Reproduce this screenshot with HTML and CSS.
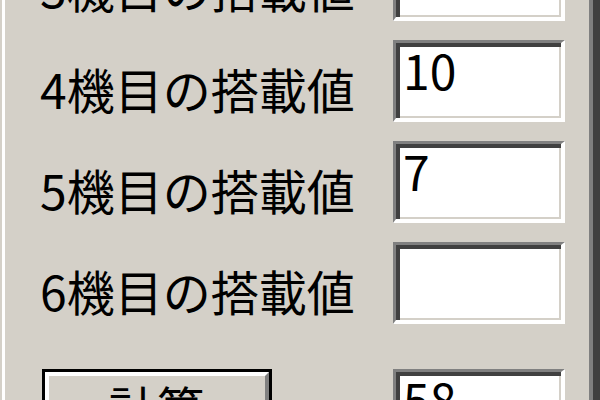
FILE: index.html
```html
<!DOCTYPE html>
<html lang="ja">
<head>
<meta charset="utf-8">
<link rel="stylesheet" href="styles.css">
</head>
<body>
<div class="window">
  <div class="frame">
    <div class="form">
      <span class="label">3機目の搭載値</span>
      <div class="field"></div>
      <span class="label">4機目の搭載値</span>
      <div class="field">10</div>
      <span class="label">5機目の搭載値</span>
      <div class="field">7</div>
      <span class="label">6機目の搭載値</span>
      <div class="field"></div>
      <button class="btn result-row" type="button"><span class="btn-inner">計算</span></button>
      <div class="field result-row">58</div>
    </div>
  </div>
</div>
</body>
</html>
```
FILE: styles.css
```css
html, body {
  margin: 0;
  padding: 0;
  background: #d4d0c8;
}
.window {
  width: 600px;
  height: 400px;
  box-sizing: border-box;
  overflow: hidden;
  border-left: 2px solid #d4d0c8;
  border-right: 7px solid #404040;
  background: #d4d0c8;
}
.frame {
  height: 100%;
  box-sizing: border-box;
  border-left: 3px solid #ffffff;
  border-right: 4px solid #808080;
  overflow: hidden;
}
.form {
  display: grid;
  grid-template-columns: 388px 172px;
  row-gap: 19px;
  margin-top: -61px;
  font-family: "Noto Sans CJK JP", "Noto Sans", sans-serif;
  color: #000;
}
.label {
  font-size: 48px;
  line-height: 48px;
  padding-top: 24px;
  padding-left: 35px;
  white-space: nowrap;
}
.field {
  height: 82px;
  box-sizing: border-box;
  background: #ffffff;
  border-style: solid;
  border-width: 3px 4px 4px 3px;
  border-color: #808080 #ffffff #ffffff #808080;
  box-shadow: inset 4px 4px 0 #404040, inset -2px -2px 0 #d4d0c8;
  font-size: 48px;
  line-height: 44px;
  padding-top: 4px;
  padding-left: 7px;
  color: #000;
}
.result-row {
  margin-top: 26px;
}
.btn {
  justify-self: start;
  align-self: start;
  margin-left: 37px;
  width: 230px;
  height: 80px;
  padding: 0;
  background: #d4d0c8;
  border: 3px solid #000;
  font-family: inherit;
  font-size: 48px;
  line-height: 48px;
  color: #000;
  text-align: center;
}
.btn-inner {
  display: block;
  height: 100%;
  box-sizing: border-box;
  border-style: solid;
  border-width: 4px 4px 4px 4px;
  border-color: #ffffff #808080 #808080 #ffffff;
  padding-top: 6px;
}
```
